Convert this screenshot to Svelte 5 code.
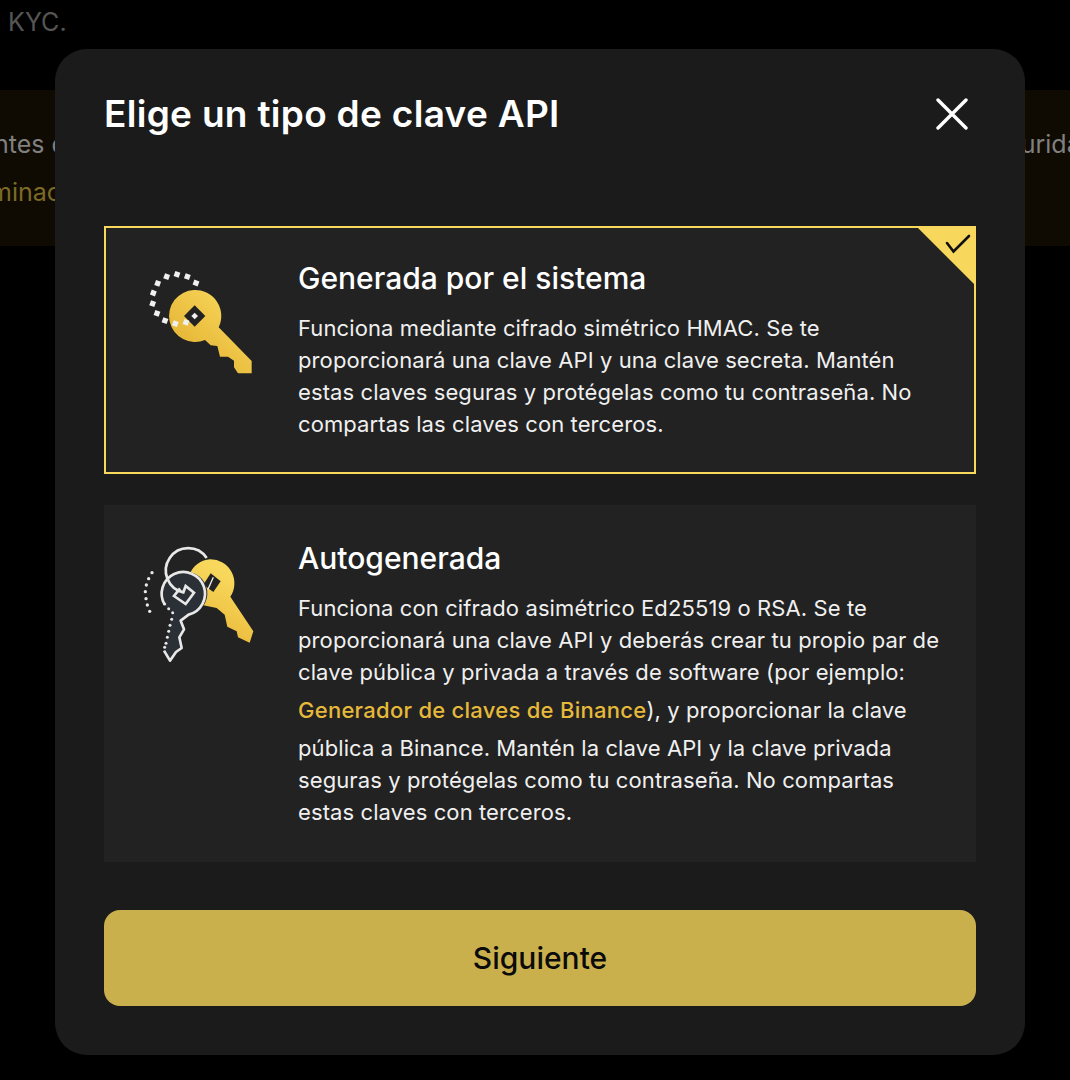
<script>
  const cards = [
    { id: 'system', title: 'Generada por el sistema' },
    { id: 'self', title: 'Autogenerada' }
  ];

  let selected = $state('system');

  // dots around the first key, in the icon's own coordinates
  const ringDots = [
    [113, 100], [140, 80], [171, 73], [202, 80], [228, 99],
    [100, 129], [98, 161], [111, 190], [135, 212], [166, 221], [198, 217]
  ];
  const sideDots = [
    [96, 128], [86, 146], [79, 165], [76, 185], [78, 206], [82, 225], [89, 244]
  ];
  const bladeDots = [
    [134, 222], [146, 236], [158, 248], [155, 268], [150, 286], [146, 304], [142, 322], [138, 340], [134, 352]
  ];
</script>

<div class="page">
  <p class="kyc">KYC.</p>
  <div class="banner">
    <div class="banner-line">
      <span>ntes de</span>
      <span>seguridad</span>
    </div>
    <div class="banner-link">minación</div>
  </div>
</div>

<div class="overlay">
  <div class="modal">
    <header>
      <h2>Elige un tipo de clave API</h2>
      <button class="close" aria-label="Cerrar">
        <svg viewBox="0 0 32 32" width="32" height="32">
          <path d="M2 2 L30 30 M30 2 L2 30" stroke="#fff" stroke-width="3.4" stroke-linecap="round" fill="none" />
        </svg>
      </button>
    </header>

    <div class="cards">
      {#each cards as card}
        <div class="card" class:active={selected === card.id} onclick={() => (selected = card.id)} role="presentation">
          {#if selected === card.id}
            <span class="corner">
              <svg viewBox="0 0 60 60" width="60" height="60">
                <path d="M0 0 H60 V60 Z" fill="#f8d85c" />
                <path d="M31 17 L37.5 25.5 L53 10" stroke="#111" stroke-width="2.6" fill="none" stroke-linecap="round" />
              </svg>
            </span>
          {/if}

          {#if card.id === 'system'}
            <svg class="icon" viewBox="0 0 450 390" width="150" height="130">
              <defs>
                <linearGradient id="gold1" x1="0.75" y1="0" x2="0.2" y2="0.6">
                  <stop offset="0" stop-color="#f8d85c" />
                  <stop offset="1" stop-color="#e8b93a" />
                </linearGradient>
              </defs>
              <path fill="url(#gold1)" d="M222 120 A78 78 0 0 1 296 232 L395 333 V370 H354 L342 352 V332 L324 320 H300 L292 288 L272 286 L255 270 A78 78 0 1 1 222 120 Z" />
              <path fill="#222" d="M224 166 L256 198 L224 230 L192 198 Z" />
              <path fill="#f0f0f0" d="M224 188 L234 198 L224 208 L214 198 Z" />
              {#each ringDots as [x, y]}
                <rect x={x - 8} y={y - 8} width="16" height="16" fill="#f0f0f0" transform="rotate(20 {x} {y})" />
              {/each}
            </svg>
          {:else}
            <svg class="icon" viewBox="0 0 450 420" width="150" height="140">
              <defs>
                <linearGradient id="gold2" x1="0.6" y1="0.2" x2="0.3" y2="0.9">
                  <stop offset="0" stop-color="#f8d85c" />
                  <stop offset="1" stop-color="#eab93a" />
                </linearGradient>
              </defs>
              <path fill="url(#gold2)" d="M270 88 A72 72 0 0 1 331 200 L400 304 L389 338 L354 322 L350 304 L322 290 L314 254 L290 234 L250 226 L210 130 A72 72 0 0 1 270 88 Z" />
              <path fill="#222" d="M272 130 L302 154 L280 186 L250 164 Z" />
              <path d="M280 142 L264 178" stroke="#f0f0f0" stroke-width="4" fill="none" />
              <path fill="#2b2f36" d="M190 125 A65 65 0 0 1 206 254 L182 272 L192 298 L178 322 L185 354 L168 366 L150 392 L132 362 L158 250 A65 65 0 0 1 126 190 A65 65 0 0 1 190 125 Z" />
              <path stroke="#e8e8e8" stroke-width="8" stroke-linejoin="round" fill="none"
                d="M134 224 A65 65 0 1 1 206 254 L182 272 L192 298 L178 322 L185 354 L168 366 L150 392 L132 362" />
              <path d="M260 84 A67 67 0 1 0 190 187 L197 168 L222 188 L197 222 L162 198 L180 175" stroke="#e8e8e8" stroke-width="8" fill="none" />
              {#each sideDots as [x, y]}
                <circle cx={x} cy={y} r="5" fill="#e8e8e8" />
              {/each}
              {#each bladeDots as [x, y]}
                <circle cx={x} cy={y} r="4.5" fill="#e8e8e8" />
              {/each}
            </svg>
          {/if}

          <div class="body">
            <h3>{card.title}</h3>
            {#if card.id === 'system'}
              <p>Funciona mediante cifrado simétrico HMAC. Se te proporcionará una clave API y una clave secreta. Mantén estas claves seguras y protégelas como tu contraseña. No compartas las claves con terceros.</p>
            {:else}
              <p>Funciona con cifrado asimétrico Ed25519 o RSA. Se te proporcionará una clave API y deberás crear tu propio par de clave pública y privada a través de software (por ejemplo: <a href="#top">Generador de claves de Binance</a>), y proporcionar la clave pública a Binance. Mantén la clave API y la clave privada seguras y protégelas como tu contraseña. No compartas estas claves con terceros.</p>
            {/if}
          </div>
        </div>
      {/each}
    </div>

    <button class="next">Siguiente</button>
  </div>
</div>

<style>
  :global(body) {
    margin: 0;
    background: #000;
    font-family: Inter, "Liberation Sans", sans-serif;
  }

  .page {
    height: 1080px;
    overflow: hidden;
    background: #000;
  }

  .kyc {
    margin: 0;
    padding: 6px 8px;
    height: 78px;
    box-sizing: border-box;
    font-size: 25px;
    line-height: 32px;
    color: #555;
  }

  .banner {
    margin-top: 12px;
    height: 156px;
    padding-top: 34px;
    box-sizing: border-box;
    background: #0f0b02;
    font-size: 25px;
    line-height: 40px;
  }

  .banner-line {
    display: flex;
    justify-content: space-between;
    color: #808080;
    margin: 0 -26px 0 -6px;
  }

  .banner-link {
    margin: 8px 0 0 -10px;
    color: #7d6a26;
  }

  .overlay {
    position: fixed;
    inset: 0;
    padding-left: 55px;
  }

  .modal {
    width: 970px;
    height: 1006px;
    margin-top: 49px;
    padding: 0 49px;
    box-sizing: border-box;
    background: #1b1b1b;
    border-radius: 32px;
    color: #fff;
  }

  header {
    display: flex;
    justify-content: space-between;
    align-items: center;
    height: 130px;
    padding-right: 8px;
  }

  h2 {
    margin: 0;
    font-size: 37px;
    font-weight: 600;
    line-height: 44px;
    letter-spacing: 0.3px;
  }

  .close {
    display: flex;
    padding: 0;
    background: none;
    border: none;
  }

  .cards {
    display: flex;
    flex-direction: column;
    gap: 31px;
    margin-top: 47px;
  }

  .card {
    position: relative;
    display: flex;
    align-items: flex-start;
    gap: 28px;
    padding: 32px 34px 34px 16px;
    background: #222;
    box-sizing: border-box;
  }

  .card + .card {
    padding-top: 33px;
  }

  .card.active {
    outline: 2px solid #f8d85c;
    outline-offset: -2px;
  }

  .corner {
    position: absolute;
    top: 0;
    right: 0;
    display: flex;
  }

  .icon {
    flex: none;
    margin-top: -8px;
  }

  h3 {
    margin: 0 0 14px;
    font-size: 30px;
    font-weight: 500;
    line-height: 40px;
  }

  p {
    margin: 0;
    font-size: 22px;
    line-height: 32px;
    letter-spacing: 0.1px;
    color: #f0f0f0;
  }

  a {
    display: inline-block;
    line-height: 44px;
    color: #e6b93a;
    font-weight: 500;
    letter-spacing: 0.27px;
    text-decoration: none;
  }

  .next {
    display: block;
    width: 100%;
    height: 96px;
    margin-top: 48px;
    border: none;
    border-radius: 16px;
    background: #c9b04d;
    color: #0b0b0b;
    font-family: inherit;
    font-size: 30px;
    font-weight: 500;
  }
</style>
